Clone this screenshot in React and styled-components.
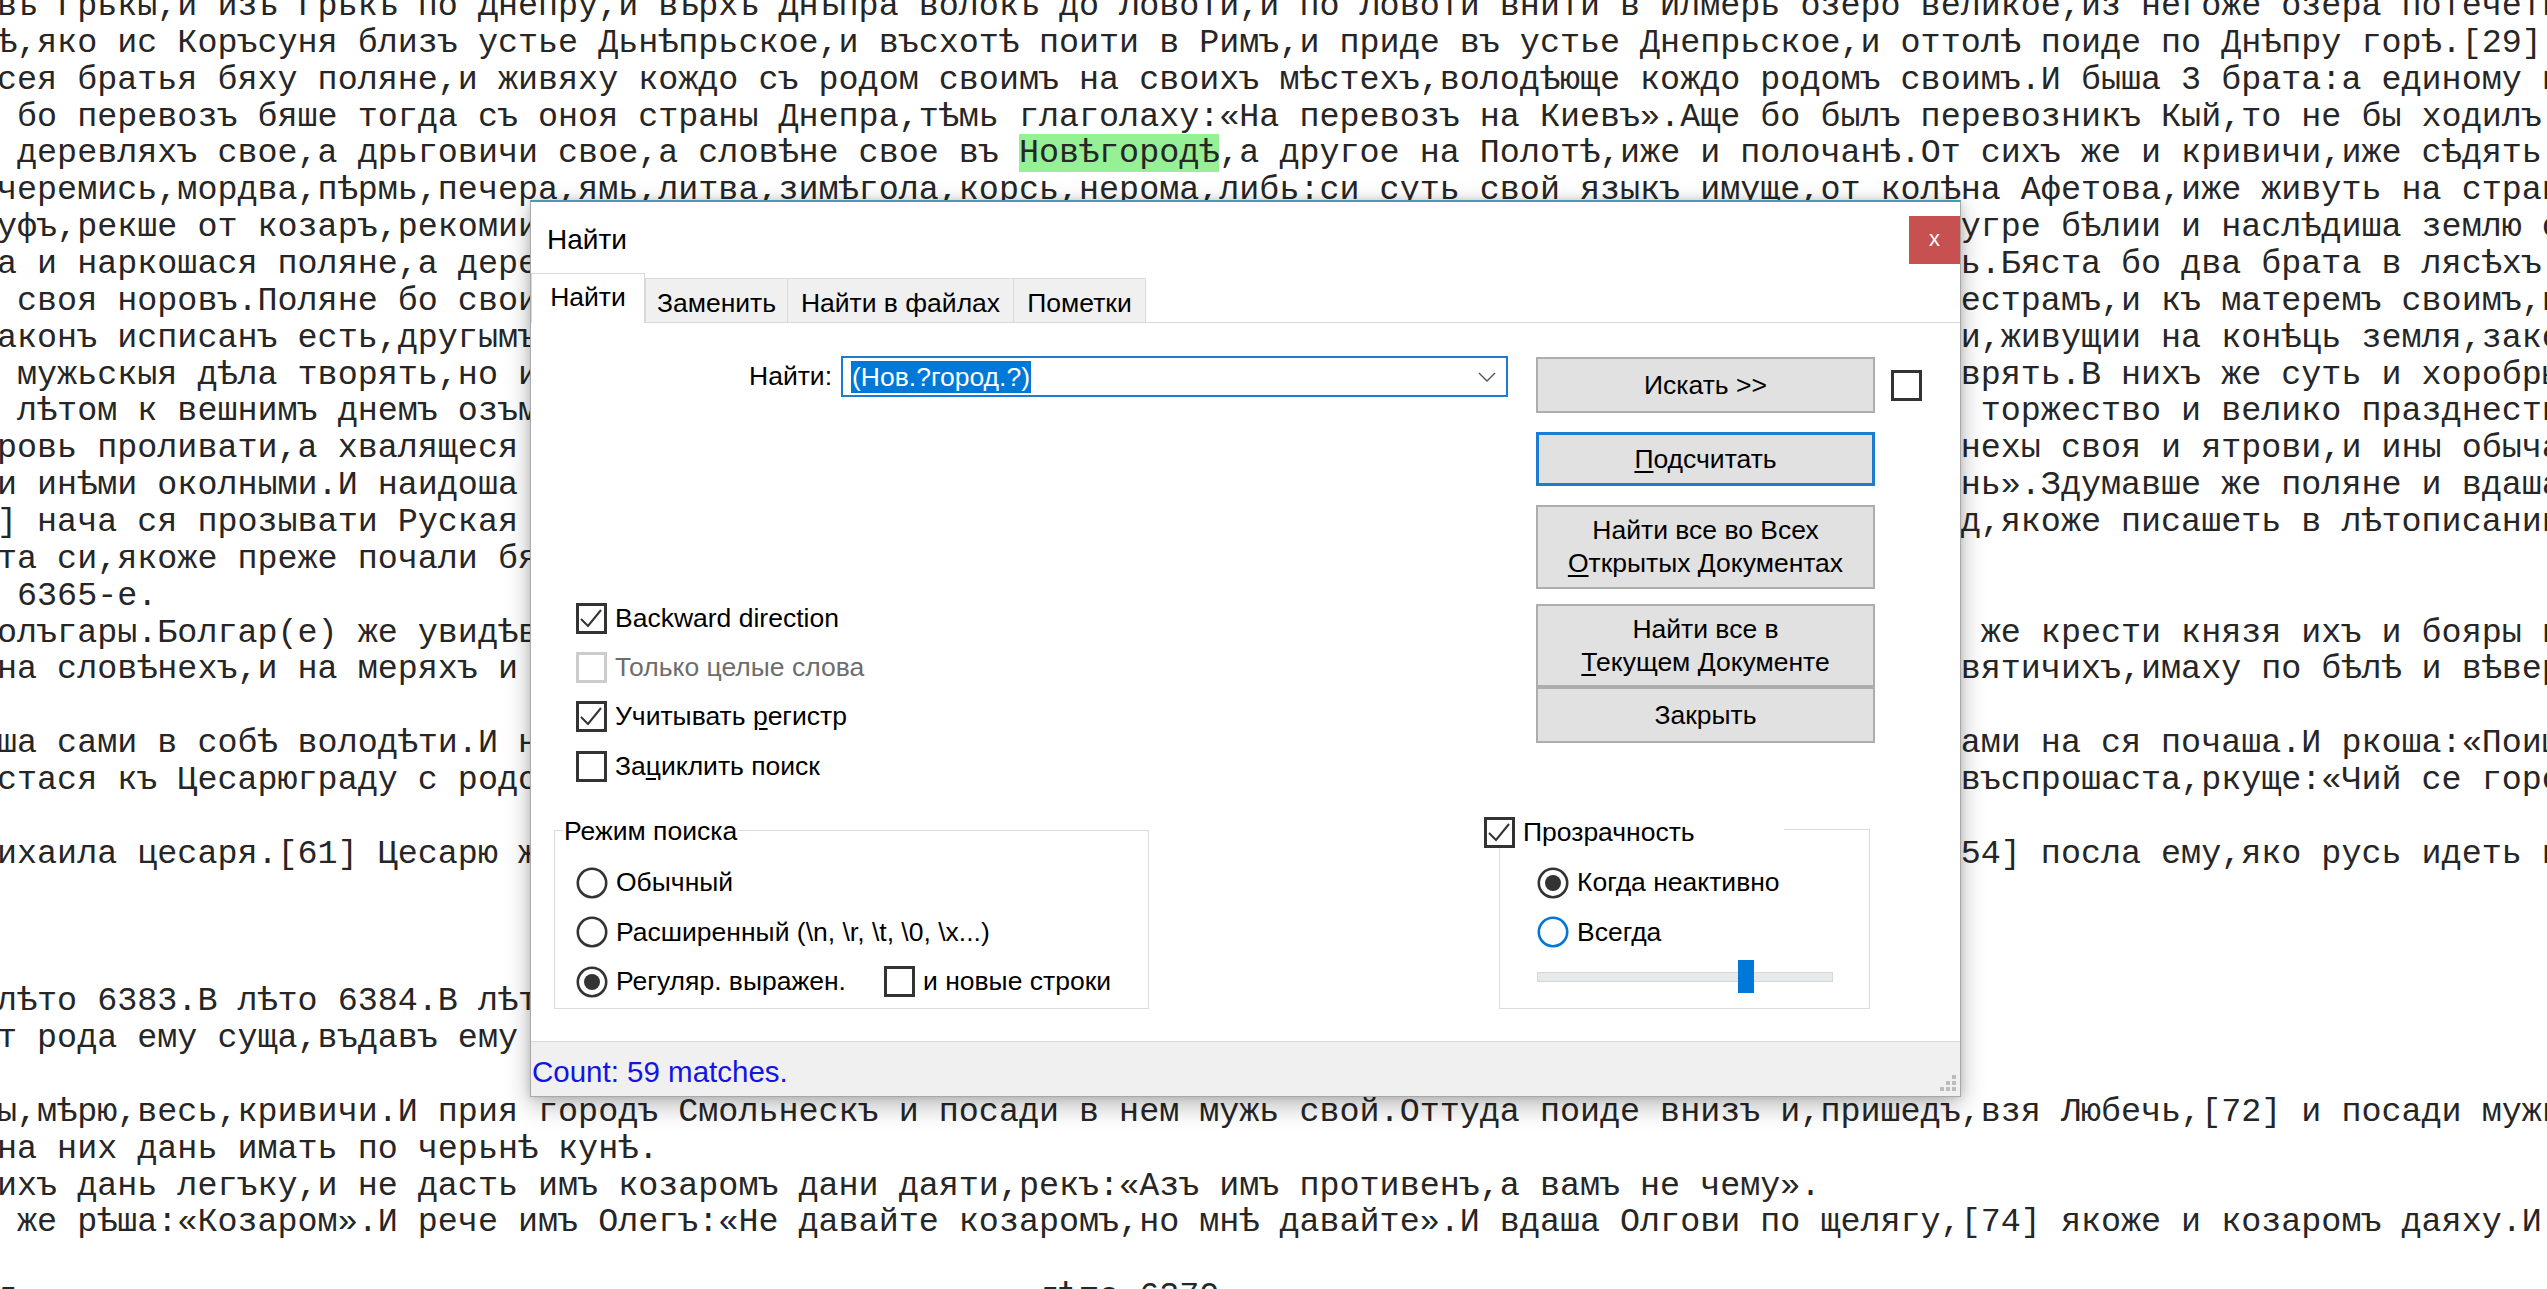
import React from 'react';
import styled, { createGlobalStyle } from 'styled-components';

const GlobalStyle = createGlobalStyle`
  html, body {
    margin: 0;
    padding: 0;
    background: #fff;
    overflow: hidden;
  }
`;

const Screen = styled.div`
  position: relative;
  width: 2547px;
  height: 1289px;
  overflow: hidden;
  background: #fff;
`;

const Editor = styled.div`
  margin: -12px 0 0 -3px;
  font-family: "Liberation Mono", "DejaVu Sans Mono", monospace;
  font-size: 33.4px;
  line-height: 36.87px;
  color: #262626;
  white-space: pre;
`;

const Line = styled.div`
  height: 36.87px;
`;

const Mark = styled.span`
  background: #96f096;
`;

const Dialog = styled.div`
  position: absolute;
  left: 530px;
  top: 200px;
  width: 1431px;
  height: 897px;
  box-sizing: border-box;
  display: flex;
  flex-direction: column;
  background: #fff;
  border: 1px solid #a8a8a8;
  border-top: 2px solid #4b98b2;
  box-shadow: 0 8px 24px rgba(0, 0, 0, 0.28), 0 0 8px rgba(0, 0, 0, 0.14);
  font-family: "Liberation Sans", Arial, sans-serif;
  font-size: 26.5px;
  color: #000;
`;

const TitleBar = styled.div`
  height: 71px;
  display: flex;
  align-items: flex-start;
  justify-content: space-between;
`;

const Title = styled.div`
  margin: 21px 0 0 16px;
  font-size: 28px;
  line-height: 34px;
`;

const CloseButton = styled.div`
  width: 51px;
  height: 48px;
  margin-top: 14px;
  background: #c75050;
  color: #fff;
  display: flex;
  align-items: center;
  justify-content: center;
  font-size: 22px;
  padding-bottom: 3px;
  box-sizing: border-box;
`;

const TabStrip = styled.div`
  height: 49px;
  display: flex;
  align-items: flex-end;
  border-bottom: 1px solid #d9d9d9;
`;

const Tab = styled.div`
  box-sizing: border-box;
  width: ${p => p.w}px;
  height: ${p => (p.active ? 50 : 44)}px;
  margin-bottom: ${p => (p.active ? -1 : 0)}px;
  display: flex;
  align-items: center;
  justify-content: center;
  padding-top: ${p => (p.active ? 0 : 5)}px;
  padding-bottom: ${p => (p.active ? 2 : 0)}px;
  background: ${p => (p.active ? '#fff' : '#f0f0f0')};
  border: 1px solid #d9d9d9;
  border-bottom: none;
  border-right: ${p => (p.last || p.active ? '1px solid #d9d9d9' : 'none')};
  position: relative;
  z-index: ${p => (p.active ? 1 : 0)};
`;

const Panel = styled.div`
  flex: 1;
  padding: 33px 0 0 22px;
`;

const TopSection = styled.div`
  display: flex;
  align-items: flex-start;
`;

const LeftCol = styled.div`
  width: 955px;
`;

const FindRow = styled.div`
  height: 41px;
  display: flex;
  align-items: center;
  justify-content: flex-end;
  gap: 9px;
`;

const ComboBox = styled.div`
  width: 667px;
  height: 41px;
  box-sizing: border-box;
  border: 2px solid #1e7bd4;
  display: flex;
  align-items: center;
  justify-content: space-between;
  padding: 0 10px 0 8px;
`;

const Selected = styled.span`
  background: #0078d7;
  color: #fff;
  line-height: 32px;
  padding: 0 1px;
`;

const CheckList = styled.div`
  margin-top: 197px;
  padding-left: 23px;
`;

const OptionRow = styled.div`
  height: ${p => p.h || 49.2}px;
  display: flex;
  align-items: center;
`;

const Option = styled.label`
  display: flex;
  align-items: center;
  gap: 8px;
  width: ${p => (p.w ? `${p.w}px` : 'auto')};
  color: ${p => (p.disabled ? '#6d6d6d' : '#000')};
`;

const Box = styled.span`
  width: 31px;
  height: 31px;
  box-sizing: border-box;
  border: 3px solid ${p => (p.disabled ? '#cccccc' : '#333')};
  background: #fff;
  display: flex;
  align-items: center;
  justify-content: center;
  flex: none;
`;

const Mn = styled.u`
  text-decoration-thickness: 2px;
  text-underline-offset: 3px;
`;

const RightCol = styled.div`
  margin: 1px 0 0 28px;
  display: flex;
  flex-direction: column;
`;

const ButtonLine = styled.div`
  display: flex;
  align-items: center;
  gap: 16px;
`;

const Button = styled.div`
  width: 339px;
  height: ${p => p.h}px;
  margin-top: ${p => p.mt || 0}px;
  box-sizing: border-box;
  background: #e1e1e1;
  border: ${p => (p.focus ? '3px solid #1f7bd0' : '2px solid #adadad')};
  display: flex;
  flex-direction: column;
  align-items: center;
  justify-content: center;
  text-align: center;
  line-height: 33px;
`;

const BottomSection = styled.div`
  display: flex;
  align-items: flex-start;
  margin-top: 39px;
`;

const Group = styled.div`
  position: relative;
  box-sizing: border-box;
  width: ${p => p.w}px;
  height: ${p => p.h}px;
  margin-left: ${p => p.ml || 0}px;
  margin-top: ${p => p.mt || 0}px;
  border: 1px solid #dcdcdc;
  padding: ${p => p.pad};
`;

const GroupTitle = styled.div`
  position: absolute;
  left: 8px;
  top: -16px;
  background: #fff;
  padding: 0 1px;
  line-height: 33px;
`;

const CheckTitle = styled.div`
  position: absolute;
  left: -16px;
  top: -13px;
  width: 300px;
  height: 31px;
  background: #fff;
  display: flex;
  align-items: center;
  gap: 8px;
`;

const Slider = styled.div`
  position: relative;
  width: 296px;
  height: 36px;
  display: flex;
  align-items: center;
`;

const Track = styled.div`
  width: 100%;
  height: 10px;
  box-sizing: border-box;
  background: #e7eaea;
  border: 1px solid #d6d6d6;
  margin-top: 5px;
`;

const Thumb = styled.div`
  position: absolute;
  left: ${p => p.pos}px;
  top: 3px;
  width: 16px;
  height: 33px;
  background: #0078d7;
`;

const StatusBar = styled.div`
  height: 55px;
  display: flex;
  align-items: center;
  background: #f0f0f0;
  border-top: 1px solid #dadada;
  padding: 5px 0 0 1px;
  box-sizing: border-box;
`;

const StatusText = styled.span`
  font-size: 29.5px;
  color: #1414e2;
`;

const Grip = styled.svg`
  align-self: flex-end;
  margin: 0 2px 3px auto;
`;

const Check = () => (
  <svg width="25" height="25" viewBox="0 0 25 25">
    <polyline points="2,13 9,20 22,4" fill="none" stroke="#333" strokeWidth="2" />
  </svg>
);

const CheckBox = ({ checked, disabled }) => (
  <Box disabled={disabled}>{checked && <Check />}</Box>
);

const Radio = ({ checked, blue }) => (
  <svg width="32" height="32" viewBox="0 0 32 32" style={{ flex: 'none' }}>
    <circle cx="16" cy="16" r="14.2" fill="#fff" stroke={blue ? '#0078d7' : '#333'} strokeWidth="2.6" />
    {checked && <circle cx="16" cy="16" r="8" fill="#333" />}
  </svg>
);

const Chevron = () => (
  <svg width="18" height="10" viewBox="0 0 18 10">
    <polyline points="1,1 9,9 17,1" fill="none" stroke="#555" strokeWidth="1.4" />
  </svg>
);

const pad = (left, right) => (right ? left.padEnd(97, ' ') + right : left);

const lines = [
  'въ Грькы,и изъ Грькъ по Днепру,и вѣрхъ Днѣпра волокъ до Ловоти,и по Ловоти внити в Илмерь озеро великое,из негоже озера потечеть',
  'ѣ,яко ис Коръсуня близъ устье Дьнѣпрьское,и въсхотѣ поити в Римъ,и приде въ устье Днепрьское,и оттолѣ поиде по Днѣпру горѣ.[29]',
  'сея братья бяху поляне,и живяху кождо съ родом своимъ на своихъ мѣстехъ,володѣюще кождо родомъ своимъ.И быша 3 брата:а единому и',
  ' бо перевозъ бяше тогда съ оноя страны Днепра,тѣмь глаголаху:«На перевозъ на Киевъ».Аще бо былъ перевозникъ Кый,то не бы ходилъ',
  null,
  'черемись,мордва,пѣрмь,печера,ямь,литва,зимѣгола,корсь,нерома,либь:си суть свой языкъ имуще,от колѣна Афетова,иже живуть на стран',
  pad('уфъ,рекше от козаръ,рекомии', ' угре бѣлии и наслѣдиша землю с'),
  pad('а и наркошася поляне,а дере', ' ь.Бяста бо два брата в лясѣхъ:'),
  pad(' своя норовъ.Поляне бо свои', 'сестрамъ,и къ матеремъ своимъ,и'),
  pad('аконъ исписанъ есть,другымъ', ' и,живущии на конѣць земля,зако'),
  pad(' мужьскыя дѣла творять,но и', ' врять.В нихъ же суть и хоробры'),
  pad(' лѣтом к вешнимъ днемъ озъм', 'о торжество и велико празднеств'),
  pad('ровь проливати,а хвалящеся ', ' нехы своя и ятрови,и ины обыча'),
  pad('и инѣми околными.И наидоша ', ' нь».Здумавше же поляне и вдаша'),
  pad('] нача ся прозывати Руская ', ' д,якоже писашеть в лѣтописании'),
  'та си,якоже преже почали бя',
  ' 6365-е.',
  pad('олъгары.Болгар(е) же увидѣв', 'и же крести князя ихъ и бояры в'),
  pad('на словѣнехъ,и на меряхъ и ', ' вятичихъ,имаху по бѣлѣ и вѣвер'),
  '',
  pad('ша сами в собѣ володѣти.И н', ' ами на ся почаша.И ркоша:«Поиш'),
  pad('стася къ Цесарюграду с родо', ' въспрошаста,ркуще:«Чий се горо'),
  '',
  pad('ихаила цесаря.[61] Цесарю ж', '[54] посла ему,яко русь идеть н'),
  '',
  '',
  '',
  'лѣто 6383.В лѣто 6384.В лѣт',
  'т рода ему суща,въдавъ ему ',
  '',
  'ы,мѣрю,весь,кривичи.И прия городъ Смольнескъ и посади в нем мужь свой.Оттуда поиде внизъ и,пришедъ,взя Любечь,[72] и посади мужь',
  'на них дань имать по черьнѣ кунѣ.',
  'ихъ дань легъку,и не дасть имъ козаромъ дани даяти,рекъ:«Азъ имъ противенъ,а вамъ не чему».',
  ' же рѣша:«Козаром».И рече имъ Олегъ:«Не давайте козаромъ,но мнѣ давайте».И вдаша Олгови по щелягу,[74] якоже и козаромъ даяху.И',
  '',
  'л                                                   лѣто 6370.',
];

const tabs = [
  { label: 'Найти', w: 114, active: true },
  { label: 'Заменить', w: 142 },
  { label: 'Найти в файлах', w: 226 },
  { label: 'Пометки', w: 133, last: true },
];

const App = () => (
  <Screen>
    <GlobalStyle />
    <Editor>
      {lines.map((text, i) =>
        text === null ? (
          <Line key={i}>
            {' деревляхъ свое,а дрьговичи свое,а словѣне свое въ '}
            <Mark>Новѣгородѣ</Mark>
            {',а другое на Полотѣ,иже и полочанѣ.От сихъ же и кривичи,иже сѣдять'}
          </Line>
        ) : (
          <Line key={i}>{text}</Line>
        )
      )}
    </Editor>

    <Dialog>
      <TitleBar>
        <Title>Найти</Title>
        <CloseButton>x</CloseButton>
      </TitleBar>

      <TabStrip>
        {tabs.map(t => (
          <Tab key={t.label} w={t.w} active={t.active} last={t.last}>
            {t.label}
          </Tab>
        ))}
      </TabStrip>

      <Panel>
        <TopSection>
          <LeftCol>
            <FindRow>
              <span>Найти:</span>
              <ComboBox>
                <Selected>(Нов.?город.?)</Selected>
                <Chevron />
              </ComboBox>
            </FindRow>
            <CheckList>
              <OptionRow>
                <Option><CheckBox checked /><span>Backward direction</span></Option>
              </OptionRow>
              <OptionRow>
                <Option disabled><CheckBox disabled /><span>Только целые слова</span></Option>
              </OptionRow>
              <OptionRow>
                <Option><CheckBox checked /><span>Учитывать <Mn>р</Mn>егистр</span></Option>
              </OptionRow>
              <OptionRow>
                <Option><CheckBox /><span>За<Mn>ц</Mn>иклить поиск</span></Option>
              </OptionRow>
            </CheckList>
          </LeftCol>

          <RightCol>
            <ButtonLine>
              <Button h={56}>Искать &gt;&gt;</Button>
              <CheckBox />
            </ButtonLine>
            <Button h={54} mt={19} focus><span><Mn>П</Mn>одсчитать</span></Button>
            <Button h={84} mt={19}>
              <span>Найти все во Всех</span>
              <span><Mn>О</Mn>ткрытых Документах</span>
            </Button>
            <Button h={83} mt={15}>
              <span>Найти все в</span>
              <span><Mn>Т</Mn>екущем Документе</span>
            </Button>
            <Button h={56}>Закрыть</Button>
          </RightCol>
        </TopSection>

        <BottomSection>
          <Group w={595} h={179} ml={1} pad="27px 0 0 21px">
            <GroupTitle>Режим поиска</GroupTitle>
            <OptionRow h={49.5}>
              <Option><Radio /><span>Обычный</span></Option>
            </OptionRow>
            <OptionRow h={49.5}>
              <Option><Radio /><span>Расширенный (\n, \r, \t, \0, \x...)</span></Option>
            </OptionRow>
            <OptionRow h={49.5}>
              <Option w={308}><Radio checked /><span>Регуляр. выражен.</span></Option>
              <Option><CheckBox /><span>и новые строки</span></Option>
            </OptionRow>
          </Group>

          <Group w={371} h={180} ml={350} mt={-1} pad="28px 0 0 37px">
            <CheckTitle><CheckBox checked /><span>Прозрачность</span></CheckTitle>
            <OptionRow h={49.5}>
              <Option><Radio checked /><span>Когда неактивно</span></Option>
            </OptionRow>
            <OptionRow h={49.5}>
              <Option><Radio blue /><span>Всегда</span></Option>
            </OptionRow>
            <Slider>
              <Track />
              <Thumb pos={201} />
            </Slider>
          </Group>
        </BottomSection>
      </Panel>

      <StatusBar>
        <StatusText>Count: 59 matches.</StatusText>
        <Grip width="20" height="20" viewBox="0 0 20 20">
          {[[14, 2], [8, 8], [14, 8], [2, 14], [8, 14], [14, 14]].map(([x, y]) => (
            <rect key={`${x}-${y}`} x={x} y={y} width="4" height="4" fill="#bcbcbc" />
          ))}
        </Grip>
      </StatusBar>
    </Dialog>
  </Screen>
);

export default App;
